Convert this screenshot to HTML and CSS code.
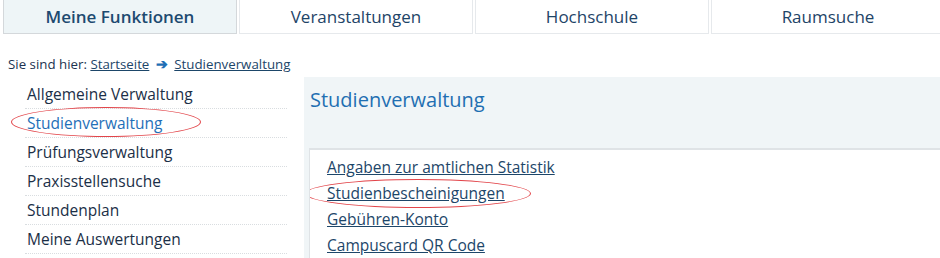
FILE: index.html
```html
<!DOCTYPE html>
<html lang="de">
<head>
	<meta charset="UTF-8">
	<title>Studienverwaltung</title>
	<link rel="stylesheet" href="styles.css">
</head>
<body>
	<ul class="topnav">
		<li class="tab active"><a href="javascript:;">Meine Funktionen</a></li>
		<li class="tab"><a href="javascript:;">Veranstaltungen</a></li>
		<li class="tab"><a href="javascript:;">Hochschule</a></li>
		<li class="tab"><a href="javascript:;">Raumsuche</a></li>
	</ul>

	<div class="crumbs">
		Sie sind hier: <a href="javascript:;">Startseite</a>
		<span class="arrow">&#10132;</span>
		<a href="javascript:;">Studienverwaltung</a>
	</div>

	<div class="main">
		<ul class="sidemenu">
			<li><a href="javascript:;">Allgemeine Verwaltung</a></li>
			<li class="current">
				<a href="javascript:;">Studienverwaltung</a>
				<span class="mark mark1"></span>
			</li>
			<li><a href="javascript:;">Prüfungsverwaltung</a></li>
			<li><a href="javascript:;">Praxisstellensuche</a></li>
			<li><a href="javascript:;">Stundenplan</a></li>
			<li><a href="javascript:;">Meine Auswertungen</a></li>
		</ul>

		<div class="content">
			<h1 class="title">Studienverwaltung</h1>
			<ul class="links">
				<li><a href="javascript:;">Angaben zur amtlichen Statistik</a></li>
				<li>
					<a href="javascript:;">Studienbescheinigungen</a>
					<span class="mark mark2"></span>
				</li>
				<li><a href="javascript:;">Gebühren-Konto</a></li>
				<li><a href="javascript:;">Campuscard QR Code</a></li>
			</ul>
		</div>
	</div>
</body>
</html>
```

FILE: styles.css
```css
html,body{
	margin:0;
	padding:0;
	background:#fff;
	font-family:"Open Sans","Liberation Sans",sans-serif;
	color:#1c3350;
	overflow:hidden;
}
ul,li{
	padding:0;
	margin:0;
	list-style:none;
}
a{
	text-decoration:none;
	color:inherit;
}

/* top navigation */
.topnav{
	display:flex;
	gap:2px;
	padding-left:3px;
	height:34px;
}
.tab{
	flex:0 0 234px;
	box-sizing:border-box;
	border:1px solid #e6e9ec;
	border-top:none;
	background:#fff;
	text-align:center;
	line-height:34px;
	font-size:17px;
}
.tab a{
	display:block;
	color:#1e4467;
}
.tab.active{
	background:#eef5f7;
	border-color:#d4d8db;
}
.tab.active a{
	font-weight:600;
	color:#1d4a70;
}

/* breadcrumbs */
.crumbs{
	padding:21px 0 0 8px;
	height:22px;
	font-size:13.3px;
	line-height:18px;
	color:#1c3350;
}
.crumbs a{
	text-decoration:underline;
	color:#1d4669;
}
.crumbs .arrow{
	color:#1f6fb5;
	font-size:14px;
	font-weight:700;
	margin:0 3px;
}

/* layout */
.main{
	display:flex;
	height:181px;
}
.sidemenu{
	margin:3px 0 0 25px;
	width:262px;
	flex:0 0 262px;
}
.sidemenu li{
	position:relative;
	height:28px;
	line-height:28px;
	padding-left:2px;
	border-bottom:1px dotted #d9dde0;
	font-size:15.5px;
}
.sidemenu li a{
	color:#1b2f47;
}
.sidemenu li.current a{
	color:#1f70b8;
}

.content{
	margin-left:17px;
	flex:1;
	background:#f0f5f7;
	padding-left:5px;
}
.title{
	margin:0;
	height:71px;
	padding:10px 0 0 1px;
	box-sizing:border-box;
	font-size:20px;
	font-weight:400;
	line-height:26px;
	color:#1f6fb2;
}
.links{
	background:#fff;
	border-top:2px solid #dfe3e6;
	border-left:1px solid #dfe3e6;
	padding:4px 0 0 17px;
	height:104px;
	overflow:hidden;
}
.links li{
	position:relative;
	line-height:26px;
	font-size:15.5px;
}
.links a{
	text-decoration:underline;
	color:#1d4669;
}

/* red hand-drawn markers */
.mark{
	position:absolute;
	border:1px solid #e2454a;
	border-radius:50%;
	pointer-events:none;
}
.mark1{
	left:-14px;
	top:-2px;
	width:188px;
	height:28px;
}
.mark2{
	left:-22px;
	top:-1px;
	width:224px;
	height:27px;
}
```
